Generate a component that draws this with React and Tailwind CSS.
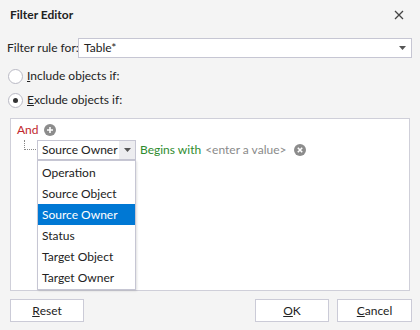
import { useState } from 'react'

const FIELDS = ['Operation', 'Source Object', 'Source Owner', 'Status', 'Target Object', 'Target Owner']

function Caret({ className = '' }) {
  return (
    <svg width="7" height="4" viewBox="0 0 7 4" className={className}>
      <path d="M0 0h7L3.5 4z" fill="#555" />
    </svg>
  )
}

function Radio({ checked, children }) {
  return (
    <div className="flex items-center h-[24px] pl-[8px]">
      <span className="w-[15px] h-[15px] rounded-full border border-[#b9b9c4] bg-white flex items-center justify-center">
        {checked && <span className="w-[5px] h-[5px] rounded-full bg-[#333]" />}
      </span>
      <span className="ml-[4px] whitespace-nowrap">{children}</span>
    </div>
  )
}

function Button({ children, className = '' }) {
  return (
    <button className={`h-[23px] w-[74px] bg-white border border-[#cbcbd7] text-[#222] flex items-center justify-center ${className}`}>
      {children}
    </button>
  )
}

export default function App() {
  const [selected] = useState('Source Owner')

  return (
    <div
      className="w-[420px] h-[330px] bg-[#f4f4f4] text-[12px] leading-none text-[#222] flex flex-col whitespace-nowrap"
      style={{ fontFamily: 'Lato, "Liberation Sans", sans-serif' }}
    >
      {/* title bar */}
      <div className="h-[30px] px-[10px] flex items-center justify-between">
        <span className="font-bold text-[12px]">Filter Editor</span>
        <svg width="10" height="10" viewBox="0 0 10 10" className="mr-[6px]">
          <path d="M1 1l8 8M9 1l-8 8" stroke="#444" strokeWidth="1.3" />
        </svg>
      </div>

      {/* filter rule row */}
      <div className="mt-[8px] flex items-center pl-[7px] pr-[8px]">
        <span className="w-[71px]">Filter rule for:</span>
        <div className="flex-1 h-[20px] bg-white border border-[#c6c6d3] flex items-center justify-between pl-[5px] pr-[5px]">
          <span>Table*</span>
          <Caret />
        </div>
      </div>

      <div className="mt-[6px]">
        <Radio><span className="underline">I</span>nclude objects if:</Radio>
        <Radio checked><span className="underline">E</span>xclude objects if:</Radio>
      </div>

      {/* condition tree */}
      <div className="mt-[6px] mx-[10px] h-[173px] bg-white border border-[#cfcfd9] pl-[6px] pt-[1px] relative">
        <div className="flex items-center h-[20px]">
          <span className="text-[#c1272d]">And</span>
          <svg width="12" height="12" viewBox="0 0 12 12" className="ml-[5px]">
            <circle cx="6" cy="6" r="6" fill="#8c8c8c" />
            <path d="M6 3v6M3 6h6" stroke="#fff" strokeWidth="1.6" />
          </svg>
        </div>
        <div className="flex items-center h-[20px]">
          <div className="w-[20px] h-[20px] relative">
            <div className="absolute left-[7px] top-0 h-[10px] border-l border-dotted border-[#888]" />
            <div className="absolute left-[7px] top-[9px] w-[12px] border-t border-dotted border-[#888]" />
          </div>
          <div className="w-[99px] h-[20px] bg-white border border-[#c6c6d3] flex items-center relative">
            <span className="flex-1 pl-[4px]">Source Owner</span>
            <span className="w-[16px] h-full bg-[#ededf0] flex items-center justify-center">
              <Caret />
            </span>
            <div className="absolute left-[-1px] top-[19px] w-[99px] bg-white border border-[#c6c6d3] shadow-[1px_1px_2px_rgba(0,0,0,0.12)] py-[1px] z-10">
              {FIELDS.map(f => (
                <div
                  key={f}
                  className={`h-[21px] flex items-center pl-[4px] ${f === selected ? 'bg-[#0078d4] text-white' : ''}`}
                >
                  {f}
                </div>
              ))}
            </div>
          </div>
          <span className="ml-[4px] text-[#2e8b2e]">Begins with</span>
          <span className="ml-[4px] text-[#8a8a8a]">&lt;enter a value&gt;</span>
          <svg width="12" height="12" viewBox="0 0 12 12" className="ml-[8px]">
            <circle cx="6" cy="6" r="6" fill="#8c8c8c" />
            <path d="M3.8 3.8l4.4 4.4M8.2 3.8l-4.4 4.4" stroke="#fff" strokeWidth="1.6" />
          </svg>
        </div>
      </div>

      {/* footer */}
      <div className="mt-[8px] px-[10px] pr-[8px] flex items-center">
        <Button><span className="underline">R</span>eset</Button>
        <div className="flex-1" />
        <Button><span className="underline">O</span>K</Button>
        <Button className="ml-[8px] w-[75px]"><span className="underline">C</span>ancel</Button>
      </div>
    </div>
  )
}
